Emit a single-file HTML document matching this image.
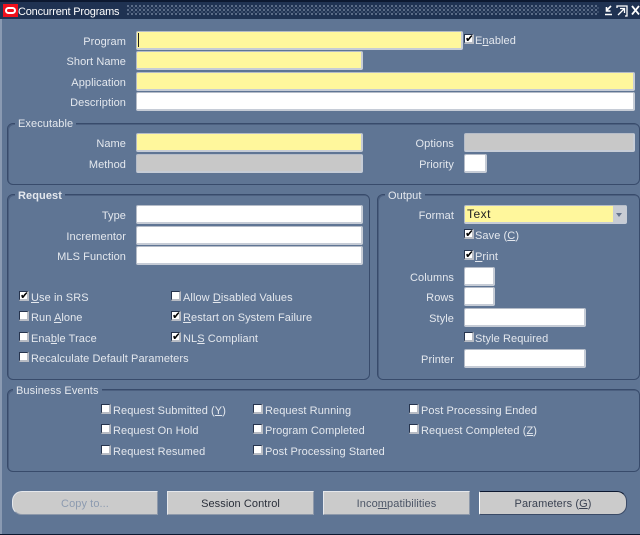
<!DOCTYPE html>
<html><head><meta charset="utf-8"><style>
html,body{margin:0;padding:0;background:#5f7594;}
#w{position:relative;width:640px;height:535px;overflow:hidden;background:#5f7594;font:11px/16px "Liberation Sans",sans-serif;color:#e4e8ee;letter-spacing:.08px;}
#w div{position:absolute;box-sizing:border-box;white-space:nowrap;}
.l{text-align:right;left:0;}
.f{background:#fff;border:1px solid #b5bcc8;border-right:2px solid #c6ccd6;border-bottom:2px solid #c6ccd6;border-radius:2px;}
.y{background:#fff79c;}
.g{background:#c8c8c8;}
.fr{border:1px solid #384b6b;border-radius:6px;box-shadow:inset 1px 1px 0 #4c6080;}
.lg{background:#5f7594;padding:0 3px;height:14px;}
.c{width:10px;height:10px;background:#fff;border:1px solid #26344e;border-right:2px solid #b8bcc4;border-bottom:2px solid #b8bcc4;font:bold 11px/8px "DejaVu Sans",sans-serif;color:#000;text-align:center;overflow:hidden;}
.b{height:24px;top:491px;background:#cbcbcb;border:1px solid #e6e8ec;border-right-color:#8e99aa;border-bottom-color:#8e99aa;text-align:center;line-height:25px;color:#2a2f3a;}
u{text-underline-offset:1px;}
</style></head><body><div id="w">
<div style="left:0;top:0;width:640px;height:19px;background:#1f3252;border-top:2px solid #0c1830;"></div>
<div style="left:3px;top:4px;width:15px;height:13px;background:#f0101c;"></div>
<div style="left:5px;top:7px;width:11px;height:7px;border:2px solid #fff;border-radius:4px;"></div>
<div style="left:18px;top:4px;color:#fff;letter-spacing:-.2px;">Concurrent Programs</div>
<div style="left:127px;top:5px;width:472px;height:10px;opacity:.7;background-image:radial-gradient(circle at 1px 1px,#8494ac 1px,transparent 1.1px),radial-gradient(circle at 3px 3px,#4c5d7a 1px,transparent 1.1px);background-size:4px 4px;"></div>
<svg style="position:absolute;left:603px;top:3px" width="37" height="14" fill="none" stroke="#fff" stroke-width="1.6"><path d="M2 11.5h7M8 3L3.500 7.500M3.500 4v4h4"/><path d="M14 5V3h10v10h-2M15 12l6-6M17 5.500h4.500V10" stroke-width="1.300"/><path d="M29 3l7 8.500M36 3l-7 8.500" stroke-width="1.800"/></svg>
<div style="left:0;top:19px;width:2px;height:516px;background:#8a9ab2;"></div>
<div style="left:0;top:534px;width:640px;height:1px;background:#0c1830;"></div>

<div class="l" style="top:34px;width:126px;">Program</div>
<div class="l" style="top:54px;width:126px;">Short Name</div>
<div class="l" style="top:75px;width:126px;">Application</div>
<div class="l" style="top:95px;width:126px;">Description</div>
<div class="f y" style="left:136px;top:31px;width:327px;height:19px;"></div>
<div style="left:138px;top:33px;width:1px;height:14px;background:#222;"></div>
<div class="f y" style="left:136px;top:51px;width:227px;height:19px;"></div>
<div class="f y" style="left:136px;top:72px;width:499px;height:19px;"></div>
<div class="f" style="left:136px;top:92px;width:499px;height:19px;"></div>
<div class="c" style="left:464px;top:34px;">✔</div><div style="left:475px;top:33px;"><span>E<u>n</u>abled</span></div>

<div class="fr" style="left:7px;top:123px;width:633px;height:62px;"></div>
<div class="lg" style="left:15px;top:116px;">Executable</div>
<div class="l" style="top:136px;width:126px;">Name</div>
<div class="l" style="top:157px;width:126px;">Method</div>
<div class="f y" style="left:136px;top:133px;width:227px;height:19px;"></div>
<div class="f g" style="left:136px;top:154px;width:227px;height:19px;"></div>
<div class="l" style="top:136px;width:454px;">Options</div>
<div class="l" style="top:157px;width:454px;">Priority</div>
<div class="f g" style="left:464px;top:133px;width:171px;height:19px;"></div>
<div class="f" style="left:464px;top:154px;width:23px;height:19px;"></div>

<div class="fr" style="left:7px;top:194px;width:363px;height:186px;"></div>
<div class="lg" style="left:15px;top:188px;font-weight:bold;">Request</div>
<div class="l" style="top:208px;width:126px;">Type</div>
<div class="l" style="top:229px;width:126px;">Incrementor</div>
<div class="l" style="top:249px;width:126px;">MLS Function</div>
<div class="f" style="left:136px;top:205px;width:227px;height:19px;"></div>
<div class="f" style="left:136px;top:226px;width:227px;height:19px;"></div>
<div class="f" style="left:136px;top:246px;width:227px;height:19px;"></div>

<div class="c" style="left:19px;top:291px;">✔</div><div style="left:31px;top:290px;"><u>U</u>se in SRS</div>
<div class="c" style="left:19px;top:311px;"></div><div style="left:31px;top:310px;">Run <u>A</u>lone</div>
<div class="c" style="left:19px;top:332px;"></div><div style="left:31px;top:331px;">Ena<u>b</u>le Trace</div>
<div class="c" style="left:19px;top:352px;"></div><div style="left:31px;top:351px;">Recalculate Default Parameters</div>
<div class="c" style="left:171px;top:291px;"></div><div style="left:183px;top:290px;">Allow <u>D</u>isabled Values</div>
<div class="c" style="left:171px;top:311px;">✔</div><div style="left:183px;top:310px;"><u>R</u>estart on System Failure</div>
<div class="c" style="left:171px;top:332px;">✔</div><div style="left:183px;top:331px;">NL<u>S</u> Compliant</div>

<div class="fr" style="left:377px;top:194px;width:263px;height:186px;"></div>
<div class="lg" style="left:385px;top:188px;">Output</div>
<div class="l" style="top:208px;width:454px;">Format</div>
<div class="f y" style="left:464px;top:205px;width:163px;height:19px;color:#222;font-size:12px;letter-spacing:.5px;line-height:16px;padding-left:2px;">Text</div>
<div style="left:613px;top:206px;width:13px;height:16px;background:#c8ccd4;"></div>
<div style="left:616px;top:213px;width:0;height:0;border:3.500px solid transparent;border-top:4px solid #66758e;"></div>
<div class="c" style="left:464px;top:229px;">✔</div><div style="left:475px;top:228px;">Save (<u>C</u>)</div>
<div class="c" style="left:464px;top:250px;">✔</div><div style="left:475px;top:249px;"><u>P</u>rint</div>
<div class="l" style="top:270px;width:454px;">Columns</div>
<div class="l" style="top:290px;width:454px;">Rows</div>
<div class="l" style="top:311px;width:454px;">Style</div>
<div class="l" style="top:352px;width:454px;">Printer</div>
<div class="f" style="left:464px;top:267px;width:31px;height:19px;"></div>
<div class="f" style="left:464px;top:287px;width:31px;height:19px;"></div>
<div class="f" style="left:464px;top:308px;width:122px;height:19px;"></div>
<div class="c" style="left:464px;top:332px;"></div><div style="left:475px;top:331px;">Style Required</div>
<div class="f" style="left:464px;top:349px;width:122px;height:19px;"></div>

<div class="fr" style="left:7px;top:389px;width:633px;height:83px;"></div>
<div class="lg" style="left:13px;top:383px;">Business Events</div>
<div class="c" style="left:101px;top:404px;"></div><div style="left:113px;top:403px;">Request Submitted (<u>Y</u>)</div>
<div class="c" style="left:101px;top:424px;"></div><div style="left:113px;top:423px;">Request On Hold</div>
<div class="c" style="left:101px;top:445px;"></div><div style="left:113px;top:444px;">Request Resumed</div>
<div class="c" style="left:253px;top:404px;"></div><div style="left:265px;top:403px;">Request Running</div>
<div class="c" style="left:253px;top:424px;"></div><div style="left:265px;top:423px;">Program Completed</div>
<div class="c" style="left:253px;top:445px;"></div><div style="left:265px;top:444px;">Post Processing Started</div>
<div class="c" style="left:409px;top:404px;"></div><div style="left:421px;top:403px;">Post Processing Ended</div>
<div class="c" style="left:409px;top:424px;"></div><div style="left:421px;top:423px;">Request Completed (<u>Z</u>)</div>

<div class="b" style="left:12px;width:146px;border-radius:10px 0 0 10px;color:#8d9bb0;">Copy to...</div>
<div class="b" style="left:167px;width:147px;">Session Control</div>
<div class="b" style="left:323px;width:147px;color:#4c5566;">Inco<u>m</u>patibilities</div>
<div class="b" style="left:479px;width:148px;border:1px solid #0c1830;border-right-color:#3a4a66;border-bottom-color:#3a4a66;border-left-color:#fff;border-radius:2px 10px 10px 2px;color:#3a4252;">Parameters (<u>G</u>)</div>
</div></body></html>
